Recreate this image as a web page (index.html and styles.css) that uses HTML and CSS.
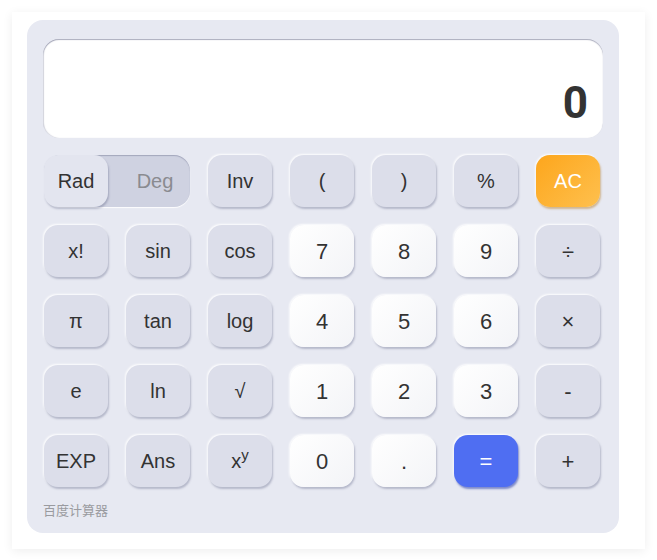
FILE: index.html
```html
<!DOCTYPE html>
<html lang="zh-CN">
<head>
    <meta charset="UTF-8">
    <meta name="viewport" content="width=device-width, initial-scale=1.0">
    <title>百度计算器</title>
    <link rel="stylesheet" href="styles.css">
</head>
<body>
    <div class="card">
        <div class="calc">
            <div class="screen">
                <span class="result">0</span>
            </div>
            <div class="keys">
                <div class="switch">
                    <span class="switch-on">Rad</span>
                    <span class="switch-off">Deg</span>
                </div>
                <button class="key fn">Inv</button>
                <button class="key fn">(</button>
                <button class="key fn">)</button>
                <button class="key fn">%</button>
                <button class="key clear">AC</button>

                <button class="key fn">x!</button>
                <button class="key fn">sin</button>
                <button class="key fn">cos</button>
                <button class="key num">7</button>
                <button class="key num">8</button>
                <button class="key num">9</button>
                <button class="key fn op">÷</button>

                <button class="key fn">π</button>
                <button class="key fn">tan</button>
                <button class="key fn">log</button>
                <button class="key num">4</button>
                <button class="key num">5</button>
                <button class="key num">6</button>
                <button class="key fn op">×</button>

                <button class="key fn">e</button>
                <button class="key fn">ln</button>
                <button class="key fn">√</button>
                <button class="key num">1</button>
                <button class="key num">2</button>
                <button class="key num">3</button>
                <button class="key fn op">-</button>

                <button class="key fn">EXP</button>
                <button class="key fn">Ans</button>
                <button class="key fn">x<sup>y</sup></button>
                <button class="key num">0</button>
                <button class="key num">.</button>
                <button class="key equal">=</button>
                <button class="key fn op">+</button>
            </div>
            <div class="brand">百度计算器</div>
        </div>
    </div>
</body>
</html>
```

FILE: styles.css
```css
body {
    margin: 0;
    padding: 0;
    background-color: #ffffff;
    font-family: 'Liberation Sans', Arial, 'Noto Sans CJK SC', sans-serif;
}

.card {
    margin: 12px;
    width: 633px;
    box-sizing: border-box;
    padding: 8px 26px 16px 15px;
    background-color: #ffffff;
    box-shadow: 0 2px 10px rgba(0, 0, 0, 0.07);
}

.calc {
    background-color: #e7e9f2;
    border-radius: 16px;
    padding: 19px 16px 13px 16px;
}

.screen {
    height: 99px;
    box-sizing: border-box;
    background-color: #ffffff;
    border-radius: 16px;
    box-shadow: inset 0 1px 1px rgba(70, 75, 110, 0.45), inset 1px 0 1px rgba(70, 75, 110, 0.2);
    display: flex;
    justify-content: flex-end;
    align-items: flex-end;
    padding: 0 15px 13px 0;
}

.result {
    font-family: Roboto, 'Liberation Sans', sans-serif;
    font-weight: 700;
    font-size: 44px;
    line-height: 44px;
    color: #333333;
}

.keys {
    display: grid;
    grid-template-columns: repeat(7, 64px);
    grid-auto-rows: 52px;
    gap: 18px;
    margin-top: 17px;
    padding-left: 1px;
}

.key {
    border: none;
    border-radius: 14px;
    font-family: 'Liberation Sans', Arial, sans-serif;
    font-size: 20px;
    color: #333333;
    padding: 1px 0 0 0;
    cursor: pointer;
    box-shadow: 1px 2px 2px rgba(90, 95, 130, 0.35), -1px -1px 2px rgba(255, 255, 255, 0.9);
}

.fn {
    background-color: #dcdeea;
}

.op {
    font-size: 22px;
}

.key sup {
    font-size: 15px;
    vertical-align: 8px;
    line-height: 0;
}

.num {
    background: linear-gradient(135deg, #ffffff, #f3f4f7);
    font-size: 22px;
}

.clear {
    background: linear-gradient(135deg, #fda61c, #fec04e);
    color: #ffffff;
    box-shadow: 1px 2px 2px rgba(180, 120, 30, 0.45), -1px -1px 2px rgba(255, 255, 255, 0.9);
}

.equal {
    background-color: #4f6ef2;
    color: #ffffff;
    font-size: 22px;
    box-shadow: 1px 2px 2px rgba(40, 60, 170, 0.55), -1px -1px 2px rgba(255, 255, 255, 0.9);
}

.switch {
    grid-column: span 2;
    display: flex;
    align-items: stretch;
    background-color: #cfd2e1;
    border-radius: 16px;
    box-shadow: inset 0 1px 1px rgba(80, 85, 120, 0.35), 0 1px 1px rgba(255, 255, 255, 0.9);
    font-size: 20px;
}

.switch-on {
    width: 64px;
    display: flex;
    align-items: center;
    justify-content: center;
    background-color: #e3e5ef;
    border-radius: 14px;
    color: #333333;
    box-shadow: 1px 2px 2px rgba(90, 95, 130, 0.35);
}

.switch-off {
    flex: 1;
    display: flex;
    align-items: center;
    justify-content: center;
    padding-left: 12px;
    color: #8a8b90;
}

.brand {
    margin-top: 15px;
    font-size: 13px;
    line-height: 18px;
    color: #9a9ba0;
}
```
